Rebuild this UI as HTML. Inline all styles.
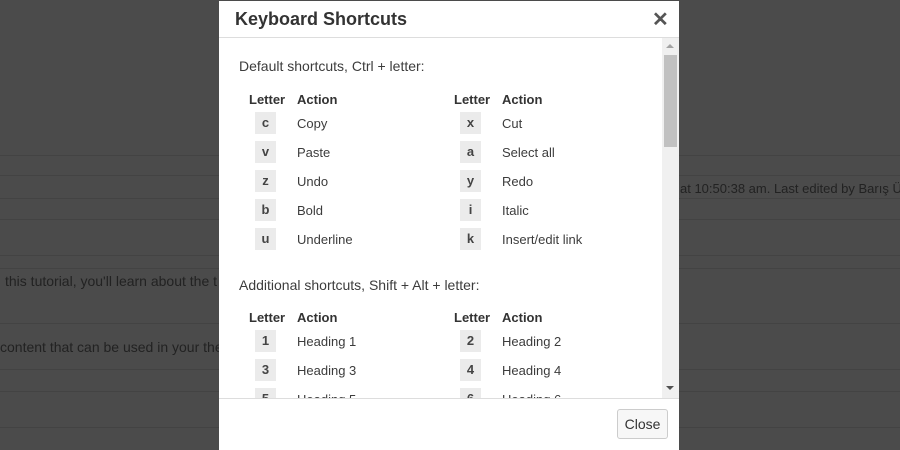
<!DOCTYPE html>
<html><head><style>
body{margin:0;width:900px;height:450px;background:#4b4b4b;position:relative;overflow:hidden;font-family:"Liberation Sans",sans-serif;color:#333}
.l{position:absolute;left:0;width:900px;height:1px;background:#434343}
.bt{position:absolute;color:#222;font-size:13px;white-space:nowrap}
#m{position:absolute;left:219px;top:1px;width:460px;height:449px;background:#fff}
.a{position:absolute;font-size:13px;white-space:nowrap;color:#3c3c3c}
.h{position:absolute;font-size:13px;white-space:nowrap;color:#333;font-weight:bold}
.k{position:absolute;width:21px;height:22px;background:#ebebeb;font-family:"Liberation Sans",sans-serif;font-weight:bold;font-size:13px;text-align:center;line-height:22px;color:#444}
</style></head><body>
<div class="l" style="top:155px"></div><div class="l" style="top:175px"></div>
<div class="l" style="top:198px"></div><div class="l" style="top:219px"></div>
<div class="l" style="top:255px"></div><div class="l" style="top:268px"></div>
<div class="l" style="top:323px"></div><div class="l" style="top:369px"></div>
<div class="l" style="top:391px"></div><div class="l" style="top:427px"></div>
<div class="bt" style="left:5px;top:273px;font-size:14px">this tutorial, you'll learn about the t</div>
<div class="bt" style="left:0;top:339px;font-size:14px">content that can be used in your theme</div>
<div class="bt" style="left:680px;top:181px">at 10:50:38 am. Last edited by Barış Ünver</div>
<div id="m">
 <div style="position:absolute;left:16px;top:8px;font-size:18px;font-weight:bold;color:#333">Keyboard Shortcuts</div>
 <div style="position:absolute;left:433px;top:6px;font-size:20px;font-weight:bold;color:#555">✕</div>
 <div style="position:absolute;left:0;top:36px;width:460px;height:1px;background:#ddd"></div>
 <div style="position:absolute;left:443px;top:37px;width:17px;height:360px;background:#f0f0f0"></div>
 <div style="position:absolute;left:445px;top:54px;width:13px;height:92px;background:#c1c1c1"></div>
 <div style="position:absolute;left:447px;top:43px;width:0;height:0;border-left:4px solid transparent;border-right:4px solid transparent;border-bottom:4px solid #a3a3a3"></div>
 <div style="position:absolute;left:447px;top:385px;width:0;height:0;border-left:4px solid transparent;border-right:4px solid transparent;border-top:4px solid #505050"></div>
 <div style="position:absolute;left:0;top:397px;width:460px;height:1px;background:#ddd"></div>
 <div style="position:absolute;left:398px;top:408px;width:51px;height:30px;border:1px solid #ccc;border-radius:3px;background:#f7f7f7;font-size:14px;line-height:28px;text-align:center;box-sizing:border-box">Close</div>
 <div style="position:absolute;left:0;top:37px;width:443px;height:360px;overflow:hidden">
  <div class="a" style="left:20px;top:20px;font-size:14px">Default shortcuts, Ctrl + letter:</div>
  <div class="h" style="left:30px;top:54px">Letter</div><div class="h" style="left:78px;top:54px">Action</div>
  <div class="h" style="left:235px;top:54px">Letter</div><div class="h" style="left:283px;top:54px">Action</div>
  <div class="k" style="left:36px;top:74px">c</div><div class="a" style="left:78px;top:78px">Copy</div>
  <div class="k" style="left:241px;top:74px">x</div><div class="a" style="left:283px;top:78px">Cut</div>
  <div class="k" style="left:36px;top:103px">v</div><div class="a" style="left:78px;top:107px">Paste</div>
  <div class="k" style="left:241px;top:103px">a</div><div class="a" style="left:283px;top:107px">Select all</div>
  <div class="k" style="left:36px;top:132px">z</div><div class="a" style="left:78px;top:136px">Undo</div>
  <div class="k" style="left:241px;top:132px">y</div><div class="a" style="left:283px;top:136px">Redo</div>
  <div class="k" style="left:36px;top:161px">b</div><div class="a" style="left:78px;top:165px">Bold</div>
  <div class="k" style="left:241px;top:161px">i</div><div class="a" style="left:283px;top:165px">Italic</div>
  <div class="k" style="left:36px;top:190px">u</div><div class="a" style="left:78px;top:194px">Underline</div>
  <div class="k" style="left:241px;top:190px">k</div><div class="a" style="left:283px;top:194px">Insert/edit link</div>
  <div class="a" style="left:20px;top:239px;font-size:14px">Additional shortcuts, Shift + Alt + letter:</div>
  <div class="h" style="left:30px;top:272px">Letter</div><div class="h" style="left:78px;top:272px">Action</div>
  <div class="h" style="left:235px;top:272px">Letter</div><div class="h" style="left:283px;top:272px">Action</div>
  <div class="k" style="left:36px;top:292px">1</div><div class="a" style="left:78px;top:296px">Heading 1</div>
  <div class="k" style="left:241px;top:292px">2</div><div class="a" style="left:283px;top:296px">Heading 2</div>
  <div class="k" style="left:36px;top:321px">3</div><div class="a" style="left:78px;top:325px">Heading 3</div>
  <div class="k" style="left:241px;top:321px">4</div><div class="a" style="left:283px;top:325px">Heading 4</div>
  <div class="k" style="left:36px;top:350px">5</div><div class="a" style="left:78px;top:354px">Heading 5</div>
  <div class="k" style="left:241px;top:350px">6</div><div class="a" style="left:283px;top:354px">Heading 6</div>
 </div>
</div>
</body></html>
